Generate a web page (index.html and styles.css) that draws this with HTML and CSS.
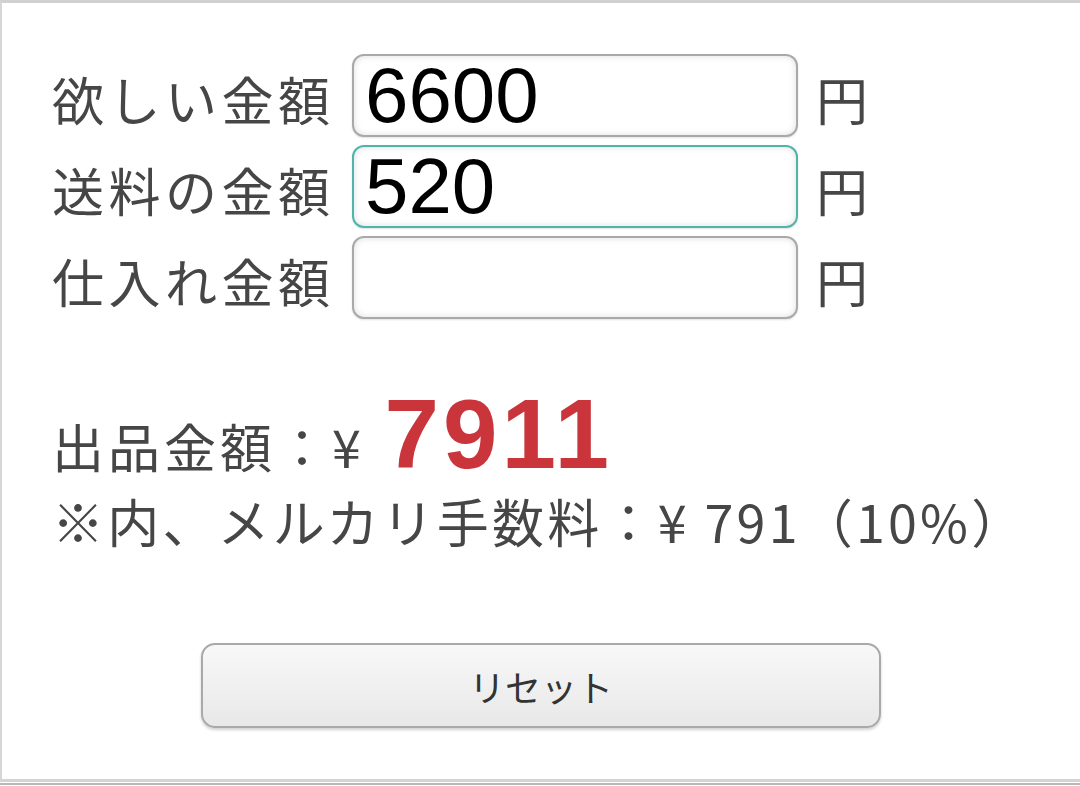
FILE: index.html
```html
<!DOCTYPE html>
<html lang="ja">
<head>
<meta charset="utf-8">
<title>メルカリ出品金額計算</title>
<link rel="stylesheet" href="styles.css">
</head>
<body>
<div class="frame">
  <form class="calc">
    <div class="row">
      <label class="label" for="want">欲しい金額</label>
      <input class="field" id="want" type="text" value="6600">
      <span class="unit">円</span>
    </div>
    <div class="row">
      <label class="label" for="ship">送料の金額</label>
      <input class="field focused" id="ship" type="text" value="520">
      <span class="unit">円</span>
    </div>
    <div class="row">
      <label class="label" for="cost">仕入れ金額</label>
      <input class="field" id="cost" type="text" value="">
      <span class="unit">円</span>
    </div>
  </form>
  <div class="result">
    <p class="total">出品金額：¥ <span class="big">7911</span></p>
    <p class="fee">※内、メルカリ手数料：¥ 791（10%）</p>
  </div>
  <div class="actions">
    <button class="reset" type="button">リセット</button>
  </div>
</div>
<div class="edge"></div>
</body>
</html>
```

FILE: styles.css
```css
html, body {
  margin: 0;
  padding: 0;
  background: #ffffff;
}
body {
  font-family: "Noto Sans CJK JP", "Noto Sans", sans-serif;
  color: #464646;
}
.frame {
  border-top: 3px solid #d0d0d0;
  border-left: 2px solid #d6d6d6;
  border-bottom: 3px solid #d4d4d4;
  box-sizing: border-box;
  height: 782px;
}
.calc {
  display: flex;
  flex-direction: column;
  gap: 8px;
  padding: 51px 0 0 50px;
}
.row {
  display: flex;
  align-items: center;
  height: 83px;
}
.label {
  font-size: 52px;
  letter-spacing: 4.5px;
  width: 300px;
  line-height: 1;
  padding-top: 6px;
  white-space: nowrap;
}
.field {
  width: 446px;
  height: 83px;
  box-sizing: border-box;
  border: 2.5px solid #a9a9a9;
  border-radius: 12px;
  background: #fff;
  box-shadow: inset 0 0 7px rgba(0,0,0,0.13), 0 1px 2px rgba(0,0,0,0.12);
  font-family: "Liberation Sans", Arial, sans-serif;
  font-size: 78px;
  line-height: 1;
  color: #000;
  padding: 0 11px;
  outline: none;
}
.field.focused {
  border-color: #4fb5aa;
}
.unit {
  font-size: 52px;
  line-height: 1;
  margin-left: 18px;
  padding-top: 6px;
}
.result {
  padding-left: 50px;
  margin-top: 66px;
}
.total {
  margin: 0;
  font-size: 52px;
  line-height: 1;
  letter-spacing: 4px;
  white-space: nowrap;
}
.big {
  font-family: "Liberation Sans", Arial, sans-serif;
  font-weight: bold;
  font-size: 98px;
  color: #c9353b;
  letter-spacing: 4px;
  margin-left: 4px;
}
.fee {
  margin: 12px 0 0;
  font-size: 52px;
  line-height: 1;
  letter-spacing: 3.2px;
  white-space: nowrap;
}
.actions {
  display: flex;
  justify-content: center;
  margin-top: 96px;
}
.reset {
  width: 680px;
  height: 85px;
  border: 2.5px solid #a9a9a9;
  border-radius: 14px;
  background: linear-gradient(#f8f8f8, #e8e8e8);
  box-shadow: 0 2px 3px rgba(0,0,0,0.18);
  font-family: "Noto Sans CJK JP", sans-serif;
  font-size: 36px;
  color: #333;
  cursor: pointer;
}
.edge {
  height: 2px;
  margin-top: 1px;
  background: #b9b9b9;
}
```
